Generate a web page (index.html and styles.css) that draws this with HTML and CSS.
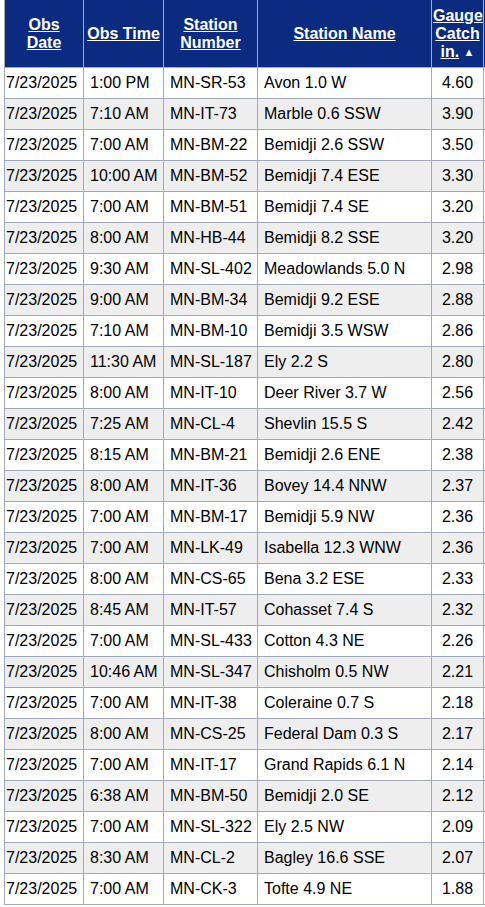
FILE: index.html
```html
<!DOCTYPE html>
<html>
<head>
<meta charset="utf-8">
<link rel="stylesheet" href="styles.css">
</head>
<body>
<div class="wrap">
<table class="obs">
<colgroup>
<col class="c-date"><col class="c-time"><col class="c-num"><col class="c-name"><col class="c-catch"><col class="c-extra">
</colgroup>
<thead>
<tr>
<th><a href="#">Obs<br>Date</a></th>
<th><a href="#">Obs Time</a></th>
<th><a href="#">Station<br>Number</a></th>
<th><a href="#">Station Name</a></th>
<th><a href="#">Gauge<br>Catch<br>in.</a> <span class="arrow">&#9650;</span></th>
<th></th>
</tr>
</thead>
<tbody>
<tr><td>7/23/2025</td><td>1:00 PM</td><td>MN-SR-53</td><td>Avon 1.0 W</td><td class="num">4.60</td><td></td></tr>
<tr><td>7/23/2025</td><td>7:10 AM</td><td>MN-IT-73</td><td>Marble 0.6 SSW</td><td class="num">3.90</td><td></td></tr>
<tr><td>7/23/2025</td><td>7:00 AM</td><td>MN-BM-22</td><td>Bemidji 2.6 SSW</td><td class="num">3.50</td><td></td></tr>
<tr><td>7/23/2025</td><td>10:00 AM</td><td>MN-BM-52</td><td>Bemidji 7.4 ESE</td><td class="num">3.30</td><td></td></tr>
<tr><td>7/23/2025</td><td>7:00 AM</td><td>MN-BM-51</td><td>Bemidji 7.4 SE</td><td class="num">3.20</td><td></td></tr>
<tr><td>7/23/2025</td><td>8:00 AM</td><td>MN-HB-44</td><td>Bemidji 8.2 SSE</td><td class="num">3.20</td><td></td></tr>
<tr><td>7/23/2025</td><td>9:30 AM</td><td>MN-SL-402</td><td>Meadowlands 5.0 N</td><td class="num">2.98</td><td></td></tr>
<tr><td>7/23/2025</td><td>9:00 AM</td><td>MN-BM-34</td><td>Bemidji 9.2 ESE</td><td class="num">2.88</td><td></td></tr>
<tr><td>7/23/2025</td><td>7:10 AM</td><td>MN-BM-10</td><td>Bemidji 3.5 WSW</td><td class="num">2.86</td><td></td></tr>
<tr><td>7/23/2025</td><td>11:30 AM</td><td>MN-SL-187</td><td>Ely 2.2 S</td><td class="num">2.80</td><td></td></tr>
<tr><td>7/23/2025</td><td>8:00 AM</td><td>MN-IT-10</td><td>Deer River 3.7 W</td><td class="num">2.56</td><td></td></tr>
<tr><td>7/23/2025</td><td>7:25 AM</td><td>MN-CL-4</td><td>Shevlin 15.5 S</td><td class="num">2.42</td><td></td></tr>
<tr><td>7/23/2025</td><td>8:15 AM</td><td>MN-BM-21</td><td>Bemidji 2.6 ENE</td><td class="num">2.38</td><td></td></tr>
<tr><td>7/23/2025</td><td>8:00 AM</td><td>MN-IT-36</td><td>Bovey 14.4 NNW</td><td class="num">2.37</td><td></td></tr>
<tr><td>7/23/2025</td><td>7:00 AM</td><td>MN-BM-17</td><td>Bemidji 5.9 NW</td><td class="num">2.36</td><td></td></tr>
<tr><td>7/23/2025</td><td>7:00 AM</td><td>MN-LK-49</td><td>Isabella 12.3 WNW</td><td class="num">2.36</td><td></td></tr>
<tr><td>7/23/2025</td><td>8:00 AM</td><td>MN-CS-65</td><td>Bena 3.2 ESE</td><td class="num">2.33</td><td></td></tr>
<tr><td>7/23/2025</td><td>8:45 AM</td><td>MN-IT-57</td><td>Cohasset 7.4 S</td><td class="num">2.32</td><td></td></tr>
<tr><td>7/23/2025</td><td>7:00 AM</td><td>MN-SL-433</td><td>Cotton 4.3 NE</td><td class="num">2.26</td><td></td></tr>
<tr><td>7/23/2025</td><td>10:46 AM</td><td>MN-SL-347</td><td>Chisholm 0.5 NW</td><td class="num">2.21</td><td></td></tr>
<tr><td>7/23/2025</td><td>7:00 AM</td><td>MN-IT-38</td><td>Coleraine 0.7 S</td><td class="num">2.18</td><td></td></tr>
<tr><td>7/23/2025</td><td>8:00 AM</td><td>MN-CS-25</td><td>Federal Dam 0.3 S</td><td class="num">2.17</td><td></td></tr>
<tr><td>7/23/2025</td><td>7:00 AM</td><td>MN-IT-17</td><td>Grand Rapids 6.1 N</td><td class="num">2.14</td><td></td></tr>
<tr><td>7/23/2025</td><td>6:38 AM</td><td>MN-BM-50</td><td>Bemidji 2.0 SE</td><td class="num">2.12</td><td></td></tr>
<tr><td>7/23/2025</td><td>7:00 AM</td><td>MN-SL-322</td><td>Ely 2.5 NW</td><td class="num">2.09</td><td></td></tr>
<tr><td>7/23/2025</td><td>8:30 AM</td><td>MN-CL-2</td><td>Bagley 16.6 SSE</td><td class="num">2.07</td><td></td></tr>
<tr><td>7/23/2025</td><td>7:00 AM</td><td>MN-CK-3</td><td>Tofte 4.9 NE</td><td class="num">1.88</td><td></td></tr>
</tbody>
</table>
</div>
</body>
</html>
```

FILE: styles.css
```css
html, body {
  margin: 0;
  padding: 0;
  overflow: hidden;
  background: #ffffff;
}

body {
  font-family: "Liberation Sans", Arial, sans-serif;
  font-size: 16px;
  color: #000000;
}

.wrap {
  padding-left: 4px;
}

.obs {
  border-collapse: collapse;
  table-layout: fixed;
  width: 539px;
}

.c-date { width: 79px; }
.c-time { width: 80px; }
.c-num { width: 94px; }
.c-name { width: 174px; }
.c-catch { width: 52px; }
.c-extra { width: 60px; }

.obs th {
  background: #0b2b80;
  color: #ffffff;
  font-weight: bold;
  font-size: 16px;
  line-height: 18px;
  height: 67px;
  padding: 0 1px;
  text-align: center;
  vertical-align: middle;
  border: 1px solid #a0aabb;
  border-top: none;
}

.obs th a {
  color: #ffffff;
  text-decoration: underline;
}

.obs th .arrow {
  font-size: 11px;
  vertical-align: 1px;
}

.obs td {
  border: 1px solid #a0aabb;
  height: 30px;
  padding: 0 2px 0 6px;
  line-height: 18px;
  white-space: nowrap;
  overflow: hidden;
}

.obs td:first-child {
  padding-left: 1px;
}

.obs tbody tr:nth-child(even) td {
  background: #eeeeee;
}

.obs td.num {
  text-align: center;
  padding: 0 2px;
}
```
